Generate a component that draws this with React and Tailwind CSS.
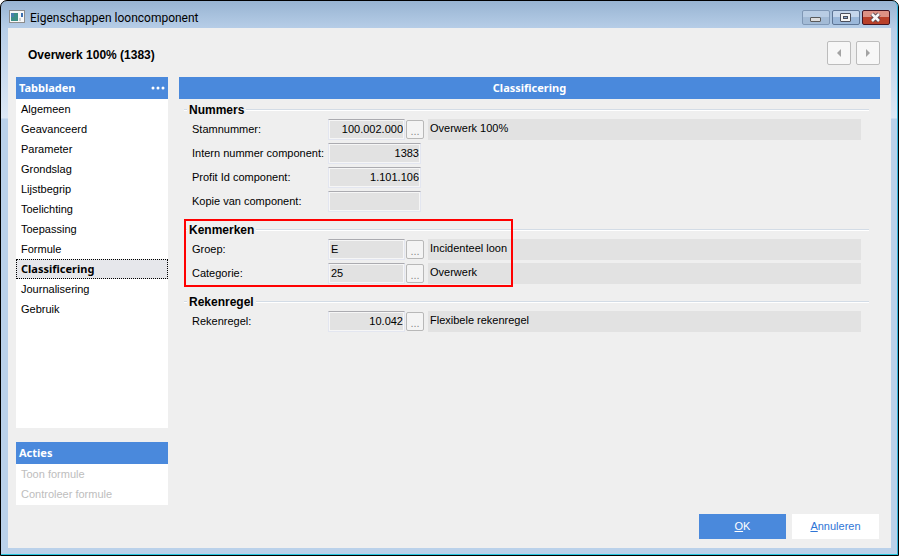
const tabs = [
  'Algemeen',
  'Geavanceerd',
  'Parameter',
  'Grondslag',
  'Lijstbegrip',
  'Toelichting',
  'Toepassing',
  'Formule',
  'Classificering',
  'Journalisering',
  'Gebruik',
]

const actions = ['Toon formule', 'Controleer formule']

const sections = [
  {
    title: 'Nummers',
    fields: [
      { id: 'stamnummer', label: 'Stamnummer:', value: '100.002.000', numeric: true, description: 'Overwerk 100%' },
      { id: 'intern', label: 'Intern nummer component:', value: '1383', numeric: true },
      { id: 'profit', label: 'Profit Id component:', value: '1.101.106', numeric: true },
      { id: 'kopie', label: 'Kopie van component:', value: '', numeric: true },
    ],
  },
  {
    title: 'Kenmerken',
    highlighted: true,
    fields: [
      { id: 'groep', label: 'Groep:', value: 'E', description: 'Incidenteel loon' },
      { id: 'categorie', label: 'Categorie:', value: '25', description: 'Overwerk' },
    ],
  },
  {
    title: 'Rekenregel',
    fields: [
      { id: 'rekenregel', label: 'Rekenregel:', value: '10.042', numeric: true, description: 'Flexibele rekenregel' },
    ],
  },
]

function TitleBar() {
  return (
    <header className="flex h-[27px] shrink-0 items-start pl-px pr-px">
      <svg className="mt-[9px] shrink-0" width="16" height="14" viewBox="0 0 16 14">
        <rect x="0.5" y="0.5" width="15" height="12" fill="#f8f8f8" stroke="#8c8c8c" />
        <rect x="2" y="3" width="7" height="8" fill="#3d8f86" />
        <rect x="2" y="3" width="3" height="4" fill="#4a7fae" />
        <rect x="12" y="3" width="2" height="4" fill="#3c6fb0" />
        <rect x="10" y="8" width="2" height="3" fill="#d0d0d0" />
      </svg>
      <h1 className="mt-[7px] ml-[5px] flex-1 font-[Roboto,sans-serif] text-[12px] leading-5">
        Eigenschappen looncomponent
      </h1>
      <div className="mt-[9px] flex gap-[2px]">
        <button
          aria-label="Minimaliseren"
          className="flex h-[15px] w-7 items-center justify-center rounded-[2px] border border-[#7f97b5] bg-linear-to-b from-[#b9cde4] from-50% to-[#a3bbd6] to-50%"
        >
          <svg width="12" height="13" viewBox="0 0 12 13">
            <rect x="0.5" y="6.5" width="10" height="4" rx="0.5" fill="#dcdcdc" stroke="#5a5a5a" />
          </svg>
        </button>
        <button
          aria-label="Maximaliseren"
          className="flex h-[15px] w-7 items-center justify-center rounded-[2px] border border-[#5d7596] bg-linear-to-b from-[#c4d6ec] from-50% to-[#9bb8da] to-50%"
        >
          <svg width="12" height="13" viewBox="0 0 12 13">
            <rect x="0.5" y="2.5" width="10" height="8" rx="0.5" fill="#f4f4f4" stroke="#4b4f5c" />
            <rect x="3.5" y="5.5" width="4" height="2" fill="#8ba9cf" stroke="#4b4f5c" />
          </svg>
        </button>
        <button
          aria-label="Sluiten"
          className="flex h-[15px] w-7 items-center justify-center rounded-[2px] border border-[#431422] bg-linear-to-b from-[#dc9184] from-50% to-[#b8402a] to-50%"
        >
          <svg width="12" height="13" viewBox="0 0 12 13">
            <path d="M2 3 9 10M9 3 2 10" stroke="#5b4650" strokeWidth="4.5" />
            <path d="M2 3 9 10M9 3 2 10" stroke="#f7f7f7" strokeWidth="2.5" />
          </svg>
        </button>
      </div>
    </header>
  )
}

function NavButton({ label, points }) {
  return (
    <button
      aria-label={label}
      className="flex size-6 items-center justify-center rounded-[2px] border border-[#bcbcbc] bg-[#f7f7f7]"
    >
      <svg width="6" height="10" viewBox="0 0 6 10">
        <polygon points={points} fill="#a3a3a3" />
      </svg>
    </button>
  )
}

function PanelHeader({ children }) {
  return (
    <h2 className="flex h-[22px] shrink-0 items-center justify-between bg-[#4a89dc] px-[3px] font-['Noto_Sans',sans-serif] text-[11px] font-bold text-white">
      {children}
    </h2>
  )
}

function Sidebar() {
  return (
    <aside className="flex w-[152px] shrink-0 flex-col text-[11px]">
      <PanelHeader>
        Tabbladen
        <svg width="14" height="4" viewBox="0 0 14 4" fill="#fff">
          <circle cx="2" cy="2" r="1.5" />
          <circle cx="7" cy="2" r="1.5" />
          <circle cx="12" cy="2" r="1.5" />
        </svg>
      </PanelHeader>
      <nav className="flex flex-1 flex-col bg-white">
        {tabs.map((tab) => (
          <button
            key={tab}
            className={
              tab === 'Classificering'
                ? "h-5 border border-dotted border-black bg-[#e6e7eb] pl-1 text-left font-['Noto_Sans',sans-serif] font-bold leading-4"
                : 'h-5 pl-[5px] text-left leading-5'
            }
          >
            {tab}
          </button>
        ))}
      </nav>
      <div className="mt-[14px]">
        <PanelHeader>Acties</PanelHeader>
        <div className="flex flex-col bg-white pb-px">
          {actions.map((action) => (
            <button key={action} disabled className="h-5 pl-[5px] text-left leading-5 text-[#bdbdbd]">
              {action}
            </button>
          ))}
        </div>
      </div>
    </aside>
  )
}

function Field({ id, label, value, numeric, description }) {
  return (
    <div className="flex h-6 items-start pl-2 text-[11px]">
      <label htmlFor={id} className="w-[136px] shrink-0 whitespace-nowrap leading-5">
        {label}
      </label>
      <input
        id={id}
        readOnly
        value={value}
        className={`h-[21px] rounded-none border border-[#e3e6f0] border-t-[#ababb0] bg-[#e2e2e2] pr-px pb-px pl-[2px] shadow-[inset_0_0_0_1px_#f6f6f6] outline-none ${
          description ? 'w-[77px]' : 'w-[93px]'
        } ${numeric ? 'text-right' : ''}`}
      />
      {description && (
        <>
          <button
            aria-label={`${label} zoeken`}
            className="mt-px ml-px h-[19px] w-[18px] shrink-0 rounded-[2px] border border-[#b8b8b8] bg-[#f4f4f4] leading-5 text-[#8a8a8a]"
          >
            ...
          </button>
          <output htmlFor={id} className="mr-2 ml-1 h-[21px] flex-1 bg-[#e2e2e2] pl-[2px] leading-[18px]">
            {description}
          </output>
        </>
      )}
    </div>
  )
}

function Section({ title, fields, highlighted }) {
  return (
    <section className="relative">
      <div className="flex h-[18px] items-center">
        <span className="h-[2px] w-[3px] border-t border-b border-t-[#d3dce6] border-b-white" />
        <h3 className="px-[2px] font-bold leading-[18px]">{title}</h3>
        <span className="h-[2px] flex-1 border-t border-b border-t-[#d3dce6] border-b-white" />
      </div>
      {fields.map((field) => (
        <Field key={field.id} {...field} />
      ))}
      {highlighted && (
        <div className="pointer-events-none absolute -top-[2px] left-0 h-[68px] w-[329px] border-2 border-[#ff0000]" />
      )}
    </section>
  )
}

export default function App() {
  return (
    <div className="bg-white">
      <div className="flex min-h-screen flex-col rounded-t-[7px] border border-black bg-[linear-gradient(#98b4d2,#b7cee8_28px,#dde8f5_117px,#bad1ea_118px)] font-['Liberation_Sans',sans-serif] text-[12px] text-black">
        <div className="flex flex-1 flex-col rounded-t-[6px] border-r border-b border-r-[#35b5dc] border-b-[#25c5dc] pr-[6px] pb-[6px] pl-[7px]">
          <TitleBar />
          <main className="flex flex-1 flex-col bg-[#efefef] pt-[13px] pr-[11px] pb-[9px] pl-2">
            <div className="flex h-9 shrink-0 items-start justify-between pl-3">
              <h2 className="pt-1 text-[12px] font-bold leading-5">Overwerk 100% (1383)</h2>
              <div className="flex gap-[5px]">
                <NavButton label="Vorige" points="5,1 5,9 1,5" />
                <NavButton label="Volgende" points="1,1 1,9 5,5" />
              </div>
            </div>
            <div className="flex flex-1 gap-[11px]">
              <Sidebar />
              <div className="min-w-0 flex-1">
                <h2 className="h-[22px] bg-[#4a89dc] text-center font-['Noto_Sans',sans-serif] text-[11px] font-bold leading-[22px] text-white">
                  Classificering
                </h2>
                <form className="flex flex-col gap-[6px] pt-[2px] pr-[11px] pl-[5px]">
                  {sections.map((section) => (
                    <Section key={section.title} {...section} />
                  ))}
                </form>
              </div>
            </div>
            <div className="mt-[9px] flex justify-end gap-[6px] pr-px text-[11px]">
              <button className="h-[25px] w-[87px] bg-[#4a89dc] text-white">
                <span className="underline">O</span>K
              </button>
              <button className="h-[25px] w-[87px] bg-white text-[#2f75d6]">
                <span className="underline">A</span>nnuleren
              </button>
            </div>
          </main>
        </div>
      </div>
    </div>
  )
}
